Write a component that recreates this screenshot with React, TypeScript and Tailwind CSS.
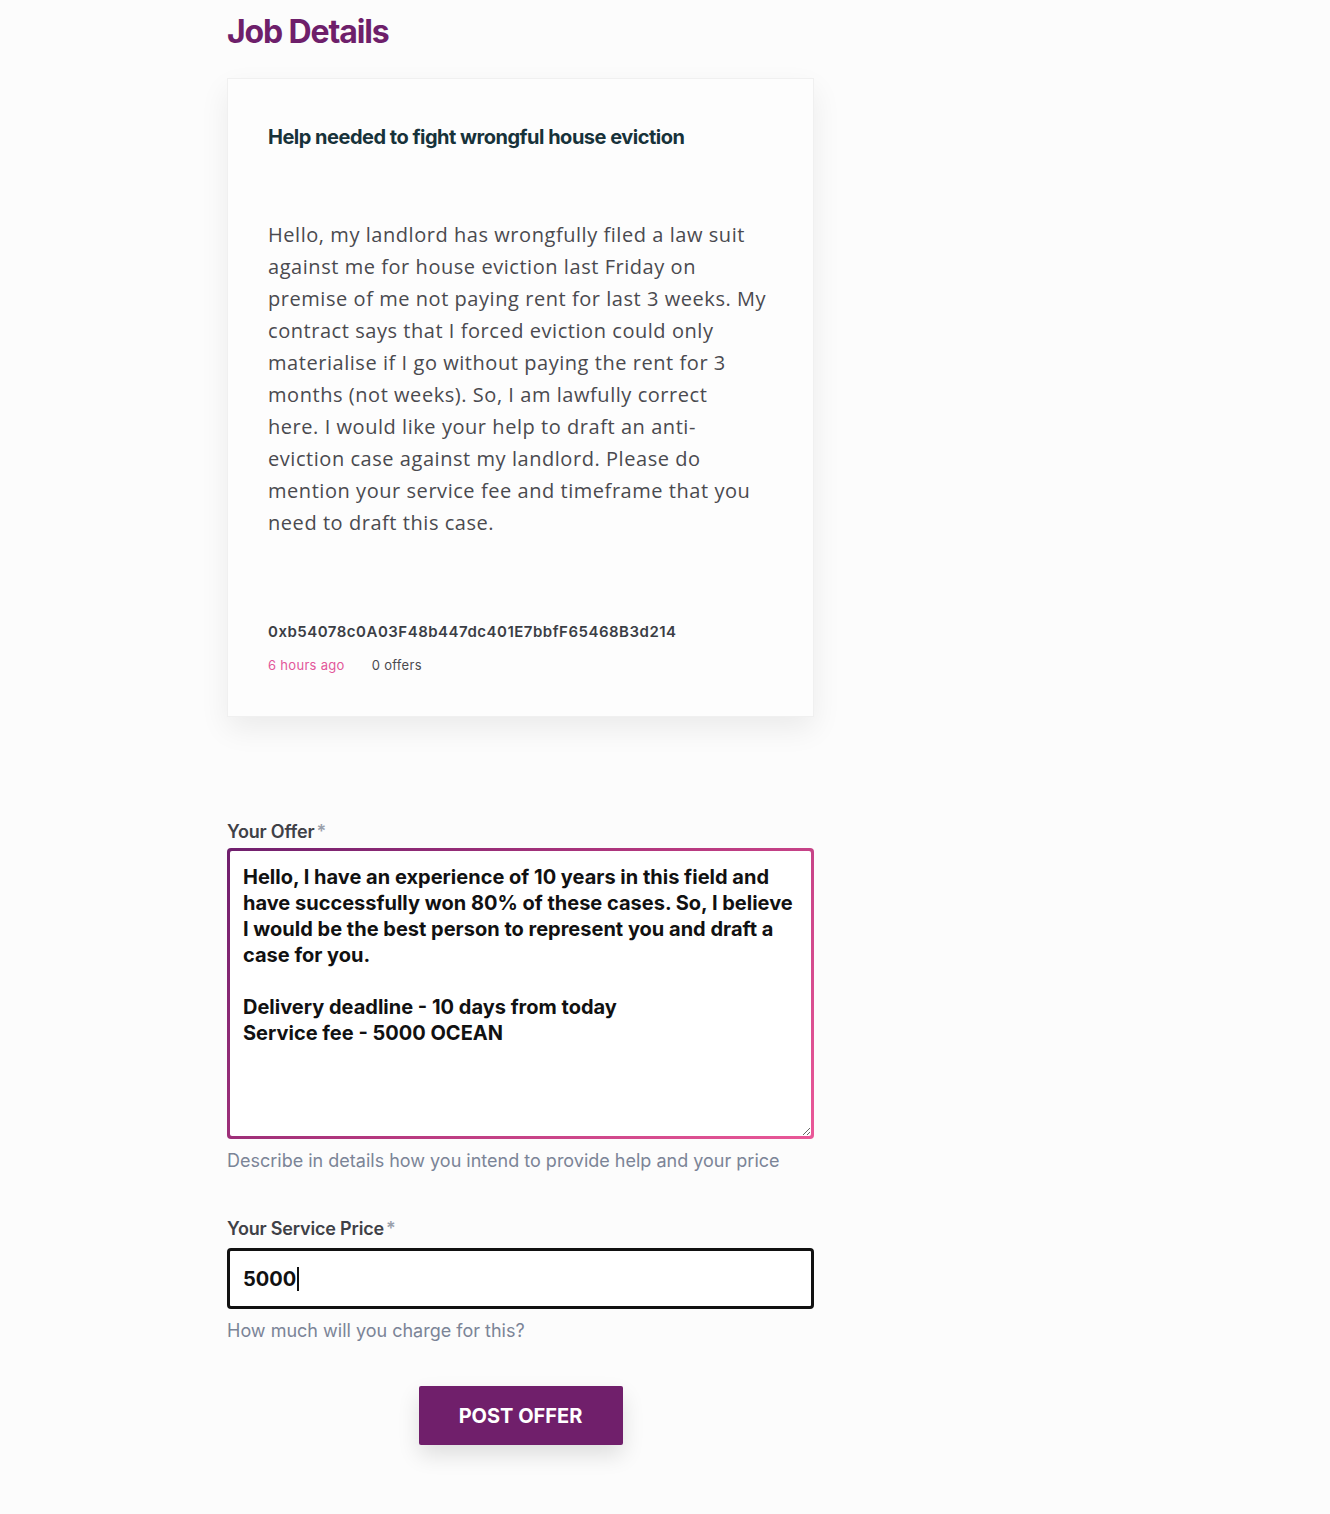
import React from "react";

const bodyLines = [
  "Hello, my landlord has wrongfully filed a law suit",
  "against me for house eviction last Friday on",
  "premise of me not paying rent for last 3 weeks. My",
  "contract says that I forced eviction could only",
  "materialise if I go without paying the rent for 3",
  "months (not weeks). So, I am lawfully correct",
  "here. I would like your help to draft an anti-",
  "eviction case against my landlord. Please do",
  "mention your service fee and timeframe that you",
  "need to draft this case.",
];

const offerText =
  "Hello, I have an experience of 10 years in this field and\nhave successfully won 80% of these cases. So, I believe\nI would be the best person to represent you and draft a\ncase for you.\n\nDelivery deadline - 10 days from today\nService fee - 5000 OCEAN";

export default function App() {
  return (
    <div className="min-h-[1514px] w-full bg-[#fcfcfc] font-['Inter',sans-serif]">
      <div className="ml-[227px] w-[587px] pb-[69px]">
        <h1 className="pt-[12px] text-[32px] leading-[40px] font-bold tracking-[-0.035em] text-[#6e1f6b]">
          Job Details
        </h1>

        <div className="mt-[26px] border border-[#f0f0f0] bg-[#fdfdfd] px-[40px] pt-[44px] pb-[42px] shadow-[0_12px_28px_rgba(0,0,0,0.07)]">
          <h2 className="text-[20px] leading-[28px] font-bold tracking-[-0.025em] text-[#17323a]">
            Help needed to fight wrongful house eviction
          </h2>
          <p className="mt-[68px] font-['Open_Sans',sans-serif] text-[20px] leading-[32px] tracking-[0.55px] text-[#4a4a4f]">
            {bodyLines.map((l, i) => (
              <span key={i} className="block whitespace-nowrap">
                {l}
              </span>
            ))}
          </p>
          <div className="mt-[83px] text-[15px] leading-[20px] font-semibold tracking-[0.5px] text-[#3b3e45]">
            0xb54078c0A03F48b447dc401E7bbfF65468B3d214
          </div>
          <div className="mt-[14px] flex gap-[27px] text-[13px] leading-[18px] tracking-[0.3px]">
            <span className="text-[#e2579a]">6 hours ago</span>
            <span className="text-[#4a4a4f]">0 offers</span>
          </div>
        </div>

        <label className="mt-[103px] block text-[18px] leading-[24px] font-semibold tracking-[-0.01em] text-[#3f4147]">
          Your Offer<span className="ml-[2px] text-[#9aa0ab]">*</span>
        </label>
        <div className="mt-[4px] rounded-[4px] bg-[linear-gradient(135deg,#6f1f6d_0%,#b5387f_50%,#ea5898_100%)] p-[3px]">
          <textarea
            className="block h-[285px] w-full resize-y rounded-[2px] bg-white p-[13px] pt-[13px] text-[20px] leading-[26px] font-bold text-[#111111] outline-none"
            defaultValue={offerText}
          />
        </div>
        <p className="mt-[10px] text-[18px] leading-[24px] text-[#7b8497]">
          Describe in details how you intend to provide help and your price
        </p>

        <label className="mt-[44px] block text-[18px] leading-[24px] font-semibold tracking-[-0.01em] text-[#3f4147]">
          Your Service Price<span className="ml-[2px] text-[#9aa0ab]">*</span>
        </label>
        <div className="mt-[7px] flex h-[61px] items-center rounded-[4px] border-[3px] border-[#111111] bg-white px-[13px]">
          <span className="text-[20px] leading-[26px] font-bold text-[#111111]">5000</span>
          <span className="ml-[1px] h-[24px] w-[2px] bg-[#111111]" />
        </div>
        <p className="mt-[10px] text-[18px] leading-[24px] text-[#7b8497]">
          How much will you charge for this?
        </p>

        <div className="mt-[43px] flex justify-center">
          <button className="h-[59px] w-[204px] rounded-[2px] bg-[#701f6b] text-[20px] font-bold text-white shadow-[0_10px_22px_rgba(0,0,0,0.12)]">
            POST OFFER
          </button>
        </div>
      </div>
    </div>
  );
}
